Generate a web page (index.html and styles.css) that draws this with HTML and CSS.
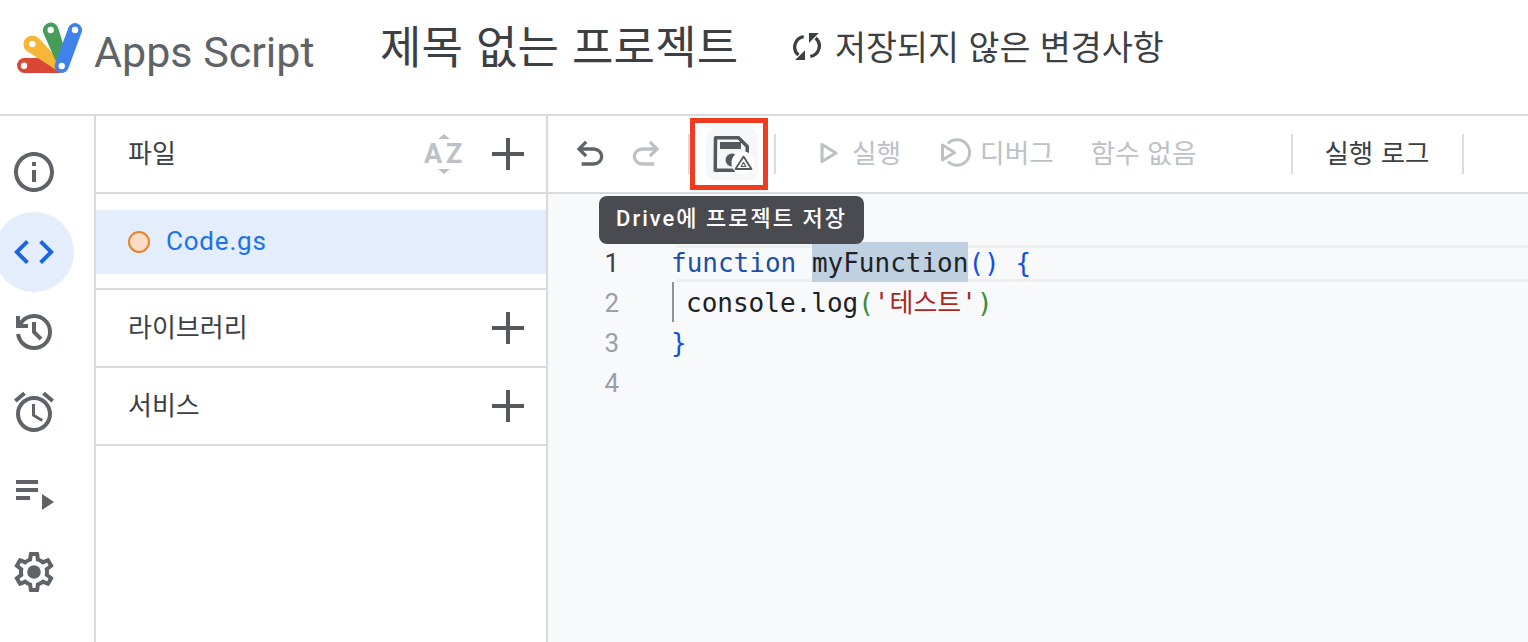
FILE: index.html
```html
<!DOCTYPE html>
<html lang="ko">
<head>
<meta charset="utf-8">
<title>Apps Script</title>
<link rel="stylesheet" href="styles.css">
</head>
<body>
<header class="top">
  <div class="brand">
    <svg class="logo" viewBox="0 0 80 60" aria-hidden="true">
      <path class="l-red" d="M8.500 36H36L47 51H8.500a7.500 7.500 0 0 1 0-15z"/>
      <circle class="l-dot" cx="8" cy="43.700" r="3.200"/>
      <path class="l-yellow" d="M10 28.500A8 8 0 0 1 22.500 16L47 42L45 51Z"/>
      <circle class="l-dot" cx="16.300" cy="22" r="3.200"/>
      <path class="l-green" d="M27 10a7.800 7.800 0 0 1 15.500-3L52 38L45 51Z"/>
      <circle class="l-dot" cx="34.700" cy="8" r="3.200"/>
      <line class="l-blue" x1="59" y1="8" x2="45.700" y2="44"/>
      <circle class="l-dot" cx="59" cy="8" r="3.200"/>
      <circle class="l-dot" cx="45.700" cy="44" r="3.200"/>
    </svg>
    <span class="brand-name">Apps Script</span>
  </div>
  <h1 class="project">제목 없는 프로젝트</h1>
  <div class="status">
    <svg class="sync" viewBox="36 44 84 88" aria-hidden="true">
      <g>
        <path class="sync-arc" d="M68 58A32 32 0 0 0 52 114"/>
        <path class="sync-head" d="M42 129H72V99Z"/>
      </g>
      <g transform="rotate(180 78 88)">
        <path class="sync-arc" d="M68 58A32 32 0 0 0 52 114"/>
        <path class="sync-head" d="M42 129H72V99Z"/>
      </g>
    </svg>
    <span>저장되지 않은 변경사항</span>
  </div>
</header>

<div class="body">
  <nav class="rail">
    <div class="rail-item"><svg class="icon" viewBox="0 0 24 24"><path d="M11 7h2v2h-2zm0 4h2v6h-2zm1-9C6.480 2 2 6.480 2 12s4.480 10 10 10 10-4.480 10-10S17.520 2 12 2zm0 18c-4.410 0-8-3.590-8-8s3.590-8 8-8 8 3.590 8 8-3.590 8-8 8z"/></svg></div>
    <div class="rail-item active"><svg class="icon" viewBox="0 0 24 24"><path d="M9.400 16.600L4.800 12l4.600-4.600L8 6l-6 6 6 6 1.400-1.400zm5.200 0l4.600-4.600-4.600-4.600L16 6l6 6-6 6-1.400-1.400z"/></svg></div>
    <div class="rail-item"><svg class="icon" viewBox="0 0 24 24"><path d="M12 21q-3.450 0-6.012-2.287T3.050 13H5.100q.35 2.600 2.313 4.300T12 19q2.925 0 4.963-2.037T19 12q0-2.925-2.037-4.963T12 5q-1.725 0-3.225.8T6.250 8H9v2H3V4h2v2.350q1.275-1.600 3.113-2.475T12 3q3.750 0 6.375 2.625T21 12q0 3.750-2.625 6.375T12 21Zm2.800-4.800L11 12.400V7h2v4.600l3.200 3.200-1.400 1.400Z"/></svg></div>
    <div class="rail-item"><svg class="icon" viewBox="0 0 24 24"><path d="M22 5.720l-4.600-3.860-1.290 1.530 4.600 3.860L22 5.720zM7.880 3.390L6.600 1.860 2 5.710l1.290 1.530 4.590-3.850zM12.500 8H11v6l4.750 2.850.75-1.230-4-2.370V8zM12 4c-4.970 0-9 4.030-9 9s4.030 9 9 9 9-4.030 9-9-4.030-9-9-9zm0 16c-3.870 0-7-3.130-7-7s3.130-7 7-7 7 3.130 7 7-3.130 7-7 7z"/></svg></div>
    <div class="rail-item"><svg class="icon" viewBox="0 0 24 24"><path d="M3 6h11v2H3zm0 4h11v2H3zm0 4h7v2H3zm13-1v8l6-4z"/></svg></div>
    <div class="rail-item"><svg class="icon" viewBox="0 0 24 24"><path d="M19.430 12.980c.04-.32.07-.64.07-.98 0-.34-.03-.66-.07-.98l2.110-1.650c.19-.15.24-.42.12-.64l-2-3.460c-.09-.16-.26-.25-.44-.25-.06 0-.12.01-.17.03l-2.490 1c-.52-.4-1.080-.73-1.690-.98l-.38-2.650C14.460 2.180 14.250 2 14 2h-4c-.25 0-.46.18-.49.42l-.38 2.650c-.61.25-1.170.59-1.690.98l-2.490-1c-.06-.02-.12-.03-.18-.03-.17 0-.34.09-.43.25l-2 3.460c-.13.22-.07.49.12.64l2.110 1.650c-.04.32-.07.65-.07.98 0 .33.03.66.07.98l-2.110 1.650c-.19.15-.24.42-.12.64l2 3.460c.09.16.26.25.44.25.06 0 .12-.01.17-.03l2.490-1c.52.4 1.080.73 1.690.98l.38 2.650c.03.24.24.42.49.42h4c.25 0 .46-.18.49-.42l.38-2.650c.61-.25 1.170-.59 1.690-.98l2.490 1c.06.02.12.03.18.03.17 0 .34-.09.43-.25l2-3.460c.12-.22.07-.49-.12-.64l-2.110-1.650zm-1.980-1.710c.04.31.05.52.05.73 0 .21-.02.43-.05.73l-.14 1.130.89.7 1.080.84-.7 1.210-1.270-.51-1.040-.42-.9.68c-.43.32-.84.56-1.250.73l-1.060.43-.16 1.130-.2 1.350h-1.400l-.19-1.350-.16-1.130-1.060-.43c-.43-.18-.83-.41-1.230-.71l-.91-.7-1.060.43-1.270.51-.7-1.210 1.080-.84.89-.7-.14-1.130c-.03-.31-.05-.54-.05-.74s.02-.43.05-.73l.14-1.130-.89-.7-1.080-.84.7-1.210 1.270.51 1.040.42.9-.68c.43-.32.84-.56 1.250-.73l1.060-.43.16-1.130.2-1.350h1.390l.19 1.350.16 1.130 1.060.43c.43.18.83.41 1.230.71l.91.7 1.060-.43 1.270-.51.7 1.210-1.070.85-.89.7.14 1.130z"/><circle cx="12" cy="12" r="3.400"/></svg></div>
  </nav>

  <aside class="files">
    <div class="section-head">
      <span class="section-label">파일</span>
      <div class="head-actions">
        <svg class="az" viewBox="0 0 40 40" aria-hidden="true">
          <path d="M20 0l6 5H14zM20 40l-6-5h12z"/>
          <text class="az-text" x="0" y="29">A</text>
          <text class="az-text" x="22" y="29">Z</text>
        </svg>
        <svg class="plus" viewBox="0 0 32 32" aria-hidden="true"><path d="M14 0h4v32h-4zM0 14h32v4H0z"/></svg>
      </div>
    </div>
    <div class="file-list">
      <div class="file-row"><span class="file-dot"></span><span class="file-name">Code.gs</span></div>
    </div>
    <div class="section-head">
      <span class="section-label">라이브러리</span>
      <svg class="plus" viewBox="0 0 32 32" aria-hidden="true"><path d="M14 0h4v32h-4zM0 14h32v4H0z"/></svg>
    </div>
    <div class="section-head">
      <span class="section-label">서비스</span>
      <svg class="plus" viewBox="0 0 32 32" aria-hidden="true"><path d="M14 0h4v32h-4zM0 14h32v4H0z"/></svg>
    </div>
  </aside>

  <main class="main">
    <div class="toolbar">
      <svg class="tool-icon" viewBox="0 0 24 24"><path d="M7 19v-2h7.100q1.575 0 2.738-1T18 13.500q0-1.500-1.162-2.500T14.100 10H7.800l2.600 2.600L9 14 4 9l5-5 1.400 1.400L7.800 8h6.300q2.425 0 4.163 1.575T20 13.500q0 2.350-1.737 3.925T14.100 19H7Z"/></svg>
      <svg class="tool-icon redo" viewBox="0 0 24 24"><path d="M7 19v-2h7.100q1.575 0 2.738-1T18 13.500q0-1.500-1.162-2.500T14.100 10H7.800l2.600 2.600L9 14 4 9l5-5 1.400 1.400L7.800 8h6.300q2.425 0 4.163 1.575T20 13.500q0 2.350-1.737 3.925T14.100 19H7Z"/></svg>
      <span class="sep sep-a"></span>
      <button class="save-btn" type="button" aria-label="Drive에 프로젝트 저장">
        <svg class="save-icon" viewBox="0 0 52 52" aria-hidden="true">
          <path class="floppy" d="M9.500 9.750H32.500L41.250 18.500V42.250H9.250Z"/>
          <rect class="floppy-fill" x="14" y="14" width="21" height="7"/>
          <circle class="floppy-fill" cx="26" cy="32" r="6.500"/>
          <circle class="badge" cx="37" cy="35" r="11.500"/>
          <path class="drive" d="M37.500 28.500L45.500 41H29.500Z"/>
          <path class="drive thin" d="M37.500 34.500L39.800 38.500H35.200Z"/>
        </svg>
      </button>
      <span class="sep sep-b"></span>
      <div class="action first">
        <svg class="run-icon" viewBox="0 0 20 24" aria-hidden="true"><path d="M3 3.500L17 12L3 20.500Z"/></svg>
        <span class="tb-label">실행</span>
      </div>
      <div class="action debug">
        <svg class="debug-icon" viewBox="0 0 32 30" aria-hidden="true">
          <path d="M3.500 7L15.500 14.500L3.500 22Z"/>
          <path d="M9 5.500A12.700 12.700 0 1 1 9 23.500"/>
        </svg>
        <span class="tb-label">디버그</span>
      </div>
      <div class="action nofn"><span class="tb-label">함수 없음</span></div>
      <span class="sep sep-c"></span>
      <div class="log-label"><span class="tb-label">실행 로그</span></div>
      <span class="sep sep-d"></span>
      <span class="focus-box"></span>
    </div>
    <div class="editor">
      <div class="tooltip">Drive에 프로젝트 저장</div>
      <div class="code">
        <div class="code-line current"><span class="num now">1</span><span class="src"><span class="kw">function</span> <span class="sel">myFunction</span><span class="br">()</span> <span class="br">{</span></span></div>
        <div class="code-line"><span class="num">2</span><span class="src guide">console.log<span class="gr">(</span><span class="str">'테스트'</span><span class="gr">)</span></span></div>
        <div class="code-line"><span class="num">3</span><span class="src"><span class="br">}</span></span></div>
        <div class="code-line"><span class="num">4</span><span class="src"></span></div>
      </div>
    </div>
  </main>
</div>
</body>
</html>
```

FILE: styles.css
```css
* { box-sizing: border-box; }
html, body { margin: 0; height: 100%; overflow: hidden; }
body {
  background: #fff;
  color: #3c4043;
  font-family: "Noto Sans CJK KR", Roboto, sans-serif;
  display: flex;
  flex-direction: column;
  width: 1528px;
  height: 642px;
}

/* header */
.top {
  height: 116px;
  flex: none;
  border-bottom: 2px solid #d9d9de;
  display: flex;
  align-items: flex-start;
}
.brand { display: flex; align-items: center; width: 380px; padding: 22px 0 0 16px; }
.logo { width: 80px; height: 60px; flex: none; }
.l-red { fill: #db4735; }
.l-yellow { fill: #f6b637; }
.l-green { fill: #459d58; }
.l-blue { stroke: #4081ec; stroke-width: 14; stroke-linecap: round; }
.l-dot { fill: #fff; }
.brand-name {
  font-family: Roboto, sans-serif;
  font-size: 43px;
  color: #5f6368;
  line-height: 60px;
  margin-left: -2px;
}
.project {
  margin: 15px 0 0;
  width: 413px;
  font-size: 45px;
  letter-spacing: .2px;
  font-weight: 400;
  line-height: 60px;
  color: #3c4043;
  white-space: nowrap;
}
.status {
  display: flex;
  align-items: center;
  gap: 14px;
  margin-top: 16px;
  font-size: 33.700px;
  line-height: 60px;
  color: #3c4043;
  white-space: nowrap;
}
.sync { width: 28px; height: 29px; flex: none; }
.sync-arc { fill: none; stroke: #3c4043; stroke-width: 10; }
.sync-head { fill: #3c4043; }

/* body */
.body { flex: 1; display: flex; min-height: 0; }
.rail {
  width: 96px;
  flex: none;
  border-right: 2px solid #d9d9de;
  padding-top: 16px;
}
.rail-item {
  width: 80px;
  height: 80px;
  margin-left: -6px;
  display: flex;
  align-items: center;
  justify-content: center;
  border-radius: 50%;
}
.icon { width: 48px; height: 48px; fill: #5f6368; }
.rail-item.active { background: #e4edfb; }
.rail-item.active .icon { fill: #1a66e0; }

/* files */
.files { width: 452px; flex: none; border-right: 2px solid #d9d9de; }
.section-head {
  height: 78px;
  border-bottom: 2px solid #d9d9de;
  display: flex;
  align-items: center;
  justify-content: space-between;
  padding: 0 22px 0 32px;
  font-size: 26px;
  color: #3c4043;
}
.section-label { margin-bottom: 6px; }
.head-actions { display: flex; align-items: center; gap: 28px; }
.az { width: 40px; height: 40px; fill: #bdc1c6; flex: none; }
.az-text { font-family: Roboto, sans-serif; font-weight: 700; font-size: 27px; }
.plus { width: 32px; height: 32px; fill: #55585d; flex: none; }
.file-list { padding: 16px 0 14px; border-bottom: 2px solid #d9d9de; }
.file-row {
  height: 64px;
  background: #e4edfb;
  display: flex;
  align-items: center;
  gap: 16px;
  padding-left: 32px;
}
.file-dot {
  width: 22px;
  height: 22px;
  border-radius: 50%;
  background: #fcdcc6;
  border: 2px solid #e3852f;
}
.file-name { font-family: Roboto, sans-serif; font-size: 26px; letter-spacing: .8px; color: #1a73e8; margin-bottom: 2px; }

/* toolbar */
.main { flex: 1; min-width: 0; display: flex; flex-direction: column; }
.toolbar {
  height: 78px;
  flex: none;
  border-bottom: 2px solid #d9d9de;
  display: flex;
  align-items: center;
  position: relative;
  padding-left: 22px;
}
.tool-icon { width: 40px; height: 40px; fill: #5f6368; flex: none; }
.redo { fill: #bdc1c6; transform: scaleX(-1); margin-left: 16px; }
.sep { width: 2px; height: 40px; background: #dadce0; flex: none; }
.sep-a { margin-left: 22px; }
.save-btn {
  width: 52px;
  height: 52px;
  margin: 0 16px;
  padding: 0;
  border: 0;
  border-radius: 10px;
  background: #f6f7f8;
  flex: none;
}
.save-icon { display: block; width: 52px; height: 52px; }
.floppy { fill: none; stroke: #55585d; stroke-width: 3.500; stroke-linejoin: round; }
.floppy-fill { fill: #55585d; }
.badge { fill: #fff; }
.drive { fill: none; stroke: #55585d; stroke-width: 1.800; stroke-linejoin: round; }
.drive.thin { stroke-width: 1.200; }
.action {
  display: flex;
  align-items: center;
  font-size: 26.700px;
  color: #bdc1c6;
  flex: none;
}
.tb-label { margin-bottom: 6px; display: block; white-space: nowrap; }
.first { margin-left: 43px; gap: 13px; }
.run-icon { width: 20px; height: 24px; flex: none; margin-bottom: 2px; }
.run-icon path { fill: none; stroke: #bdc1c6; stroke-width: 3.200; stroke-linejoin: round; }
.debug { margin-left: 38px; gap: 9px; }
.debug-icon { width: 32px; height: 30px; flex: none; margin-bottom: 2px; }
.debug-icon path { fill: none; stroke: #bdc1c6; stroke-width: 3; stroke-linejoin: round; }
.nofn { margin-left: 37px; }
.sep-c { margin-left: 95px; }
.log-label { margin-left: 31px; font-size: 26.500px; color: #3c4043; flex: none; }
.sep-d { margin-left: 33px; }
.focus-box {
  position: absolute;
  left: 142px;
  top: 2px;
  width: 78px;
  height: 72px;
  border: 5px solid #f03b1f;
}

/* editor */
.editor { flex: 1; background: #f8f9fa; position: relative; padding-top: 48px; min-height: 0; }
.tooltip {
  position: absolute;
  left: 51px;
  top: 2px;
  height: 48px;
  width: 265px;
  border-radius: 8px;
  background: #4a4b50;
  color: #fff;
  font-family: Roboto, "Noto Sans CJK KR", sans-serif;
  font-size: 22px;
  font-weight: 500;
  letter-spacing: 2px;
  line-height: 46px;
  text-align: center;
  white-space: nowrap;
}
.code { font-family: "DejaVu Sans Mono", "Noto Sans CJK KR", monospace; font-size: 26px; }
.code-line { height: 40px; line-height: 42px; display: flex; }
.num { width: 71px; flex: none; text-align: right; color: #9aa0a6; font-family: Roboto, sans-serif; font-size: 26px; }
.num.now { color: #3c4043; }
.src {
  margin-left: 52px;
  flex: 1;
  white-space: pre;
  color: #202124;
}
.current .src {
  background:
    linear-gradient(#eeeeee, #eeeeee) 5px 3px / 100% 3px no-repeat,
    linear-gradient(#eeeeee, #eeeeee) 5px 37px / 100% 3px no-repeat;
}
.guide { margin-left: 53px; padding-left: 12px; border-left: 2px solid #8f9296; }
.kw { color: #1c4fa8; }
.sel { display: inline-block; height: 40px; background: #bfd0e0; }
.br { color: #0f4fe8; }
.gr { color: #3a8a3a; }
.str { color: #a8281f; }
```
